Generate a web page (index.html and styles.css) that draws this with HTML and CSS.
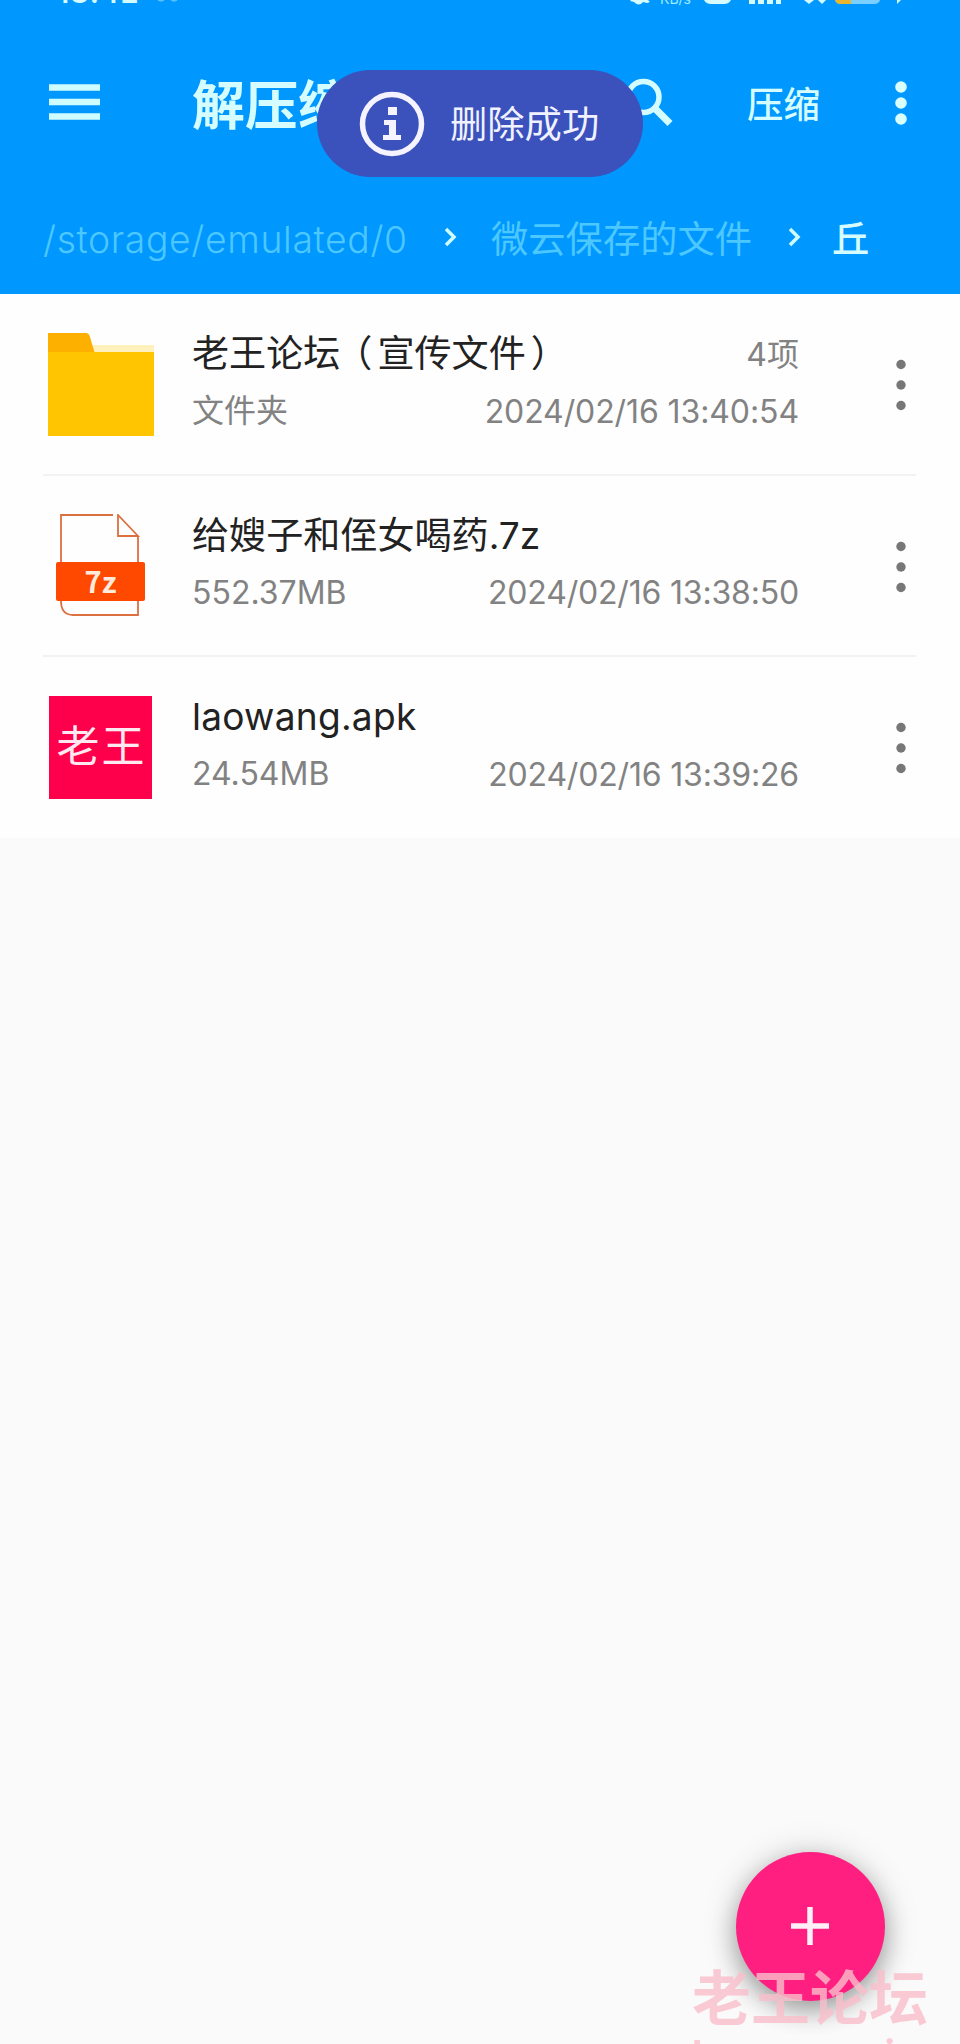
FILE: index.html
```html
<!DOCTYPE html>
<html lang="zh-CN">
<head>
<meta charset="utf-8">
<title>解压缩</title>
<link rel="stylesheet" href="styles.css">
</head>
<body>
<div class="screen">
  <header class="header">
    <div class="status">
      <span class="clock">18:42</span>
      <svg class="status-mark" width="24" height="4" viewBox="0 0 24 4"><path d="M2 0l3 1 3-1M15 0l3 1 3-1" fill="none" stroke="#58c0ff" stroke-width="1.500"/></svg>
      <svg class="status-icons" width="300" height="6" viewBox="0 0 300 6"><g fill="#d6fbff"><path d="M8 0h17l2 2-3 1-4-1q-4 5-9 0L7 1z"/><path d="M81 0h27q-2 4-7 4H88q-5 0-7-4z"/><path d="M126 0h6v4h-6zM135 0h6v4h-6zM144 0h6v4h-6zM153 0h5v4h-5zM181 0h10l-5 4zM195 0h8l-4 4zM274 0h4l-4 4z"/></g><path d="M212 0h45q-1 4-6 4h-33q-5 0-6-4z" fill="#7bcfff"/><path d="M212 0h16v4h-10q-5 0-6-4z" fill="#e8b52d"/></svg>
      <span class="speed">KB/s</span>
    </div>
    <div class="toolbar">
      <svg class="menu" width="51" height="36" viewBox="0 0 51 36"><path d="M0 3.500h51M0 18h51M0 32.500h51" stroke="#cffcff" stroke-width="6.400"/></svg>
      <h1 class="title">解压缩</h1>
      <svg class="search" width="50" height="50" viewBox="0 0 50 50"><circle cx="19.500" cy="19" r="15.500" fill="none" stroke="#d5fdff" stroke-width="5.500"/><path d="M30.500 30L46 45.500" stroke="#d5fdff" stroke-width="7"/></svg>
      <span class="compress">压缩</span>
      <svg class="more" width="14" height="46" viewBox="0 0 14 46"><g fill="#d8feff"><circle cx="7" cy="7" r="5.800"/><circle cx="7" cy="23" r="5.800"/><circle cx="7" cy="39" r="5.800"/></g></svg>
    </div>
    <nav class="crumbs">
      <span class="crumb path">/storage/emulated/0</span>
      <svg class="chev" width="14" height="20" viewBox="0 0 14 20"><path d="M2 2l8 8-8 8" fill="none" stroke="#cffcff" stroke-width="3.500"/></svg>
      <span class="crumb dir">微云保存的文件</span>
      <svg class="chev" width="14" height="20" viewBox="0 0 14 20"><path d="M2 2l8 8-8 8" fill="none" stroke="#cffcff" stroke-width="3.500"/></svg>
      <span class="crumb here">丘</span>
    </nav>
  </header>

  <main class="list">
    <div class="row">
      <div class="icon"><svg width="110" height="110" viewBox="0 0 110 110"><path d="M44 13h63v10H46z" fill="#fff1bd"/><path d="M1 1h38q3 0 4 4l5 17H1z" fill="#fdb000"/><path d="M1 20h106v84H1z" fill="#ffc500"/></svg></div>
      <div class="info">
        <div class="line"><span class="name">老王论<span class="tight">坛</span><span class="wide">（</span>宣传文<span class="wide">件</span>）</span><span class="meta count">4项</span></div>
        <div class="line sub"><span class="meta kind">文件夹</span><span class="meta date">2024/02/16 13:40:54</span></div>
      </div>
      <svg class="dots" width="10" height="52" viewBox="0 0 10 52"><g fill="#777"><circle cx="5" cy="5.500" r="4.700"/><circle cx="5" cy="26" r="4.700"/><circle cx="5" cy="46.500" r="4.700"/></g></svg>
    </div>
    <div class="row">
      <div class="icon"><svg width="110" height="110" viewBox="0 0 110 110"><g fill="none" stroke="#dc7040" stroke-width="1.800"><path d="M66 1H14v60M71 1v21h20zM91 22v79H26q-12 0-12-14V50"/></g><rect x="9" y="48" width="89" height="39" rx="2" fill="#ff4800"/><text class="badge" x="53.500" y="79" text-anchor="middle">7z</text></svg></div>
      <div class="info">
        <div class="line"><span class="name">给嫂子和侄女喝药.7z</span></div>
        <div class="line sub"><span class="meta size">552.37MB</span><span class="meta date narrow">2024/02/16 13:38:50</span></div>
      </div>
      <svg class="dots" width="10" height="52" viewBox="0 0 10 52"><g fill="#777"><circle cx="5" cy="5.500" r="4.700"/><circle cx="5" cy="26" r="4.700"/><circle cx="5" cy="46.500" r="4.700"/></g></svg>
    </div>
    <div class="row">
      <div class="icon"><div class="apk">老王</div></div>
      <div class="info">
        <div class="line"><span class="name latin">laowang.apk</span></div>
        <div class="line sub"><span class="meta size">24.54MB</span><span class="meta date narrow">2024/02/16 13:39:26</span></div>
      </div>
      <svg class="dots" width="10" height="52" viewBox="0 0 10 52"><g fill="#777"><circle cx="5" cy="5.500" r="4.700"/><circle cx="5" cy="26" r="4.700"/><circle cx="5" cy="46.500" r="4.700"/></g></svg>
    </div>
  </main>

  <div class="toast">
    <svg width="66" height="66" viewBox="0 0 66 66"><circle cx="33" cy="33" r="29.500" fill="none" stroke="#f4f3ff" stroke-width="5.500"/><path d="M29 16h9v8h-9zM25 29h12v15h5v5H24v-5h6V34h-5z" fill="#f4f3ff"/></svg>
    <span class="toast-text">删除成功</span>
  </div>
  <div class="fab"><svg width="38" height="38" viewBox="0 0 38 38"><path d="M0 19h38M19 0v38" stroke="#fff0f8" stroke-width="5.500"/></svg></div>
  <div class="watermark"><span class="mark">老王论坛</span><span class="mark-url">laowang.vip</span></div>
</div>
</body>
</html>
```
FILE: styles.css
```css
* { box-sizing: border-box; }
body { margin: 0; background: #fafafa; font-family: Inter, "Noto Sans CJK SC", sans-serif; }
svg { display: block; flex: none; }
.screen { position: relative; width: 960px; height: 2044px; overflow: hidden; background: #fafafa; }
.header { height: 294px; background: #0098ff; box-shadow: 0 1px 6px #a9d4f5; }
.status { position: relative; height: 60px; overflow: hidden; }
.clock { position: absolute; left: 57px; top: -24px; font-size: 29px; line-height: 34px; font-weight: 600; color: #d6fbff; letter-spacing: 1px; }
.status-mark { position: absolute; left: 156px; top: 0; }
.status-icons { position: absolute; left: 623px; top: 0; }
.speed { position: absolute; left: 660px; top: -10px; font-size: 14px; line-height: 18px; color: #9be9ff; }
.toolbar { display: flex; align-items: center; height: 86px; padding: 0 32px 0 49px; }
.menu { margin-top: -3px; }
.title { width: 160px; margin: 5px 0 0 92px; font-size: 53px; line-height: 80px; font-weight: 700; color: #d5fdff; white-space: nowrap; }
.search { margin: 0 0 0 272px; }
.compress { width: 76px; margin: 4px 0 0 73px; font-size: 36.500px; line-height: 54px; font-weight: 500; color: #d5fdff; white-space: nowrap; }
.more { margin: 0 0 0 71px; }
.crumbs { display: flex; align-items: center; height: 90px; padding-left: 43px; margin-top: 48px; white-space: nowrap; line-height: 54px; }
.crumb { margin-top: 1px; font-size: 37.300px; color: #4cc8ff; font-weight: 400; }
.path { width: 367px; font-weight: 350; letter-spacing: .65px; }
.chev { margin: -4px 0 0 34px; }
.dir { width: 263px; margin-left: 33px; }
.here { margin-left: 30px; color: #d5fdff; font-weight: 500; }
.list { background: #fefefe; height: 544px; padding: 0 44px 0 43px; }
.row { display: flex; height: 181.500px; border-bottom: 2px solid #f2f1f3; padding-top: 38px; }
.row:last-child { border-bottom: 0; }
.icon { width: 149px; padding-left: 4px; flex: none; }
.info { width: 607px; flex: none; }
.line { display: flex; justify-content: space-between; align-items: center; height: 44px; line-height: 44px; white-space: nowrap; }
.sub { margin-top: 13px; }
.name { font-size: 37.100px; color: #222; }
.latin { letter-spacing: .25px; }
.tight { letter-spacing: -5px; }
.wide { letter-spacing: 5px; }
.meta { font-size: 32px; color: #828282; }
.count { padding-top: 2px; }
.date { padding-top: 1px; letter-spacing: -.1px; }
.narrow { letter-spacing: -.18px; }
.dots { margin: 27px 0 0 97px; }
.badge { font: 700 29px "Noto Sans CJK SC", sans-serif; fill: #ffeadb; }
.apk { display: flex; align-items: center; justify-content: center; width: 103px; height: 103px; margin: 1px 0 0 2px; background: #fe004b; color: #ffe8f0; font-size: 43px; line-height: 103px; letter-spacing: 2px; padding: 0 0 2px 2px; }
.toast { position: absolute; left: 317px; top: 70px; width: 326px; height: 107px; border-radius: 54px; background: #3b51bc; display: flex; align-items: center; padding-left: 42px; }
.toast-text { margin: -3px 0 0 25px; font-size: 37.300px; color: #f1f2ff; font-weight: 400; white-space: nowrap; }
.fab { position: absolute; left: 736px; top: 1852px; width: 149px; height: 149px; border-radius: 50%; background: #ff1f80; display: flex; align-items: center; justify-content: center; padding: 0 1px 1px 0; box-shadow: 0 10px 24px rgba(0,0,0,.3), 0 2px 36px rgba(0,0,0,.16); }
.watermark { position: absolute; left: 692px; top: 1957px; display: flex; flex-direction: column; white-space: nowrap; font-weight: 700; color: rgba(250,190,202,.8); }
.mark { font-size: 59px; line-height: 84px; }
.mark-url { font-size: 38px; line-height: 48px; margin-top: -11px; }
```
